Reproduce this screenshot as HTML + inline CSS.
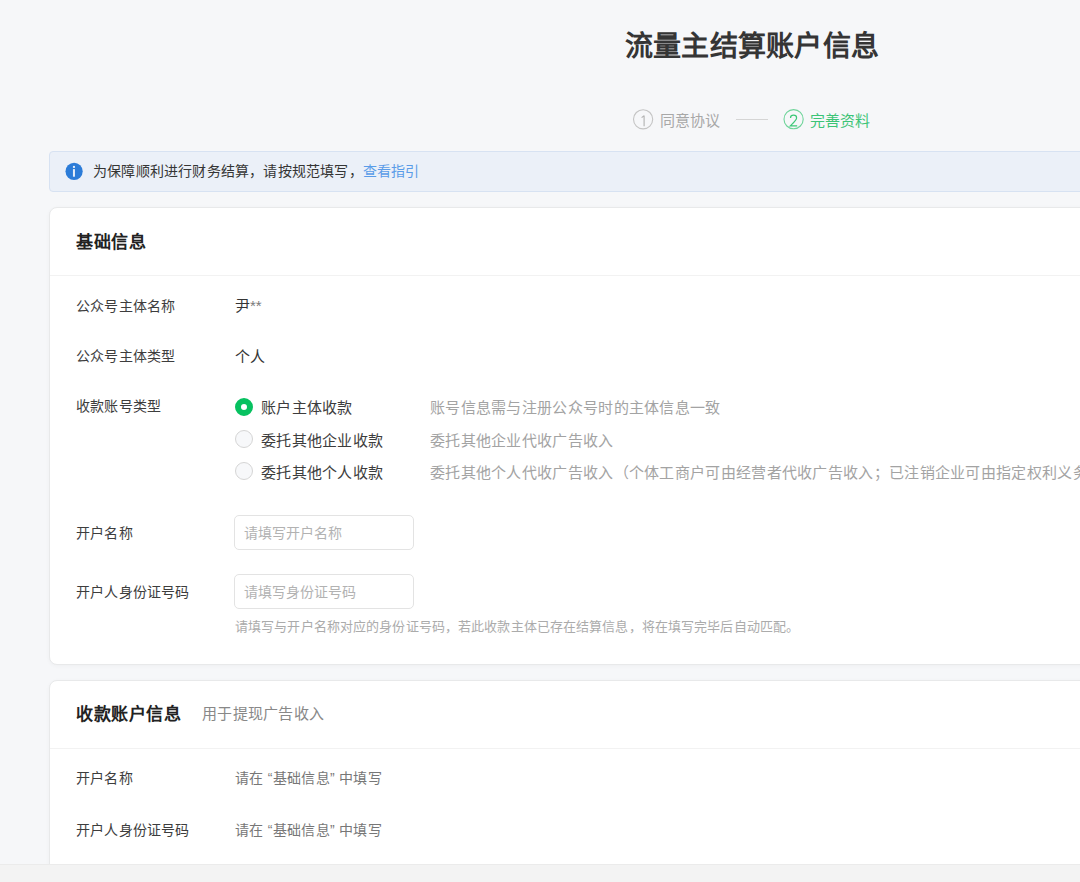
<!DOCTYPE html>
<html lang="zh-CN"><head><meta charset="utf-8">
<style>
html,body{margin:0;padding:0;}
body{width:1080px;height:882px;overflow:hidden;position:relative;background:#f6f7f9;font-family:"Liberation Sans",sans-serif;color:#353535;}
.abs{position:absolute;white-space:nowrap;}
.title{left:0;width:1504px;top:27px;text-align:center;font-size:28px;font-weight:bold;line-height:40px;color:#353535;letter-spacing:0.25px;}
.steps{left:0;width:1504px;top:108px;height:22px;text-align:center;font-size:15px;line-height:22px;}
.stxt{font-size:15px;line-height:22px;}
.circ{display:inline-block;width:18px;height:18px;border:1px solid #b8b8b8;border-radius:50%;text-align:center;line-height:22px;font-size:16px;vertical-align:top;box-sizing:content-box;}
.alert{left:49px;top:151px;width:1500px;height:39px;background:#ebf0f8;border:1px solid #d7e2f2;border-radius:4px;}
.card{left:49px;width:1500px;background:#fff;border:1px solid #e8e9ea;border-radius:8px;box-shadow:0 1px 4px rgba(0,0,0,0.035);}
.hd{font-size:17px;font-weight:bold;color:#222;letter-spacing:0.5px;}
.lbl{font-size:14px;color:#3d3d3d;line-height:20px;letter-spacing:0.2px;}
.val{font-size:15px;color:#353535;line-height:20px;}
.radio{width:16px;height:16px;border:1px solid #d5d5d5;border-radius:50%;background:#f7f8fa;}
.radio.on{width:6px;height:6px;border:6px solid #07c160;background:#fff;}
.rl{font-size:15px;letter-spacing:0.3px;color:#3d3d3d;line-height:20px;}
.desc{font-size:15px;letter-spacing:0.3px;color:#a3a3a3;line-height:20px;}
.inp{width:178px;height:33px;border:1px solid #e3e3e3;border-radius:5px;background:#fff;}
.ph{font-size:14px;color:#b2b2b2;line-height:20px;}
.hint{font-size:13px;color:#ababab;line-height:18px;letter-spacing:0.12px;}
.foot{left:0;top:864px;width:1080px;height:18px;background:#f3f3f3;border-top:1px solid #ebebeb;box-sizing:border-box;}
</style></head><body>
<div class="abs title">流量主结算账户信息</div>
<svg class="abs" style="left:630px;top:100px;" width="180" height="40" viewBox="630 100 180 40"><circle cx="643.1" cy="119.3" r="9.6" fill="none" stroke="#c4c4c4" stroke-width="1.1"/><path d="M644.1,115.6 L644.1,126.3 M644.1,115.7 L641.6,117.6" fill="none" stroke="#b4b4b4" stroke-width="1.15"/><circle cx="793.6" cy="119.2" r="9.6" fill="none" stroke="#6fd49a" stroke-width="1.1"/><path d="M790.5,117.9 C790.5,116.1 791.8,115.2 793.6,115.2 C795.4,115.2 796.6,116.3 796.6,117.9 C796.6,119.8 795.2,121 790.3,125.9 L797.2,125.9" fill="none" stroke="#3cc877" stroke-width="1.2"/></svg>
<div class="abs stxt" style="left:660px;top:110px;color:#a8a8a8;">同意协议</div>
<div class="abs" style="left:736px;top:119px;width:32px;height:1px;background:#d5d5d5;"></div>
<div class="abs stxt" style="left:810px;top:110px;color:#3cc477;">完善资料</div>

<div class="abs alert"></div>
<svg class="abs" style="left:62px;top:160px;" width="24" height="24" viewBox="0 0 24 24"><circle cx="12.1" cy="11.3" r="8.6" fill="#2c7cd8"/><rect x="10.95" y="5.9" width="2" height="2" fill="#e6eef9"/><rect x="10.95" y="9.1" width="2" height="7.6" fill="#e6eef9"/></svg>
<div class="abs lbl" style="left:93px;top:161px;color:#353535;">为保障顺利进行财务结算，请按规范填写，<span style="color:#5a9ce8">查看指引</span></div>

<div class="abs card" style="top:207px;height:456px;"></div>
<div class="abs hd" style="left:76px;top:231px;line-height:24px;">基础信息</div>
<div class="abs" style="left:50px;top:275px;width:1500px;height:1px;background:#f2f2f2;"></div>

<div class="abs lbl" style="left:76px;top:296px;">公众号主体名称</div>
<div class="abs val" style="left:235px;top:296px;">尹<span style="color:#7a7a7a">**</span></div>
<div class="abs lbl" style="left:76px;top:346px;">公众号主体类型</div>
<div class="abs val" style="left:235px;top:347px;">个人</div>
<div class="abs lbl" style="left:76px;top:396px;">收款账号类型</div>

<div class="abs radio on" style="left:235px;top:398px;"></div>
<div class="abs rl" style="left:261px;top:398px;">账户主体收款</div>
<div class="abs desc" style="left:430px;top:398px;">账号信息需与注册公众号时的主体信息一致</div>
<div class="abs radio" style="left:235px;top:430px;"></div>
<div class="abs rl" style="left:261px;top:431px;">委托其他企业收款</div>
<div class="abs desc" style="left:430px;top:431px;">委托其他企业代收广告收入</div>
<div class="abs radio" style="left:235px;top:462px;"></div>
<div class="abs rl" style="left:261px;top:463px;">委托其他个人收款</div>
<div class="abs desc" style="left:430px;top:463px;">委托其他个人代收广告收入（个体工商户可由经营者代收广告收入；已注销企业可由指定权利义务承接人代收广告收入）</div>

<div class="abs lbl" style="left:76px;top:523px;">开户名称</div>
<div class="abs inp" style="left:234px;top:515px;"></div>
<div class="abs ph" style="left:244px;top:523px;">请填写开户名称</div>

<div class="abs lbl" style="left:76px;top:582px;">开户人身份证号码</div>
<div class="abs inp" style="left:234px;top:574px;"></div>
<div class="abs ph" style="left:244px;top:582px;">请填写身份证号码</div>
<div class="abs hint" style="left:235px;top:618px;">请填写与开户名称对应的身份证号码，若此收款主体已存在结算信息，将在填写完毕后自动匹配。</div>

<div class="abs card" style="top:680px;height:400px;"></div>
<div class="abs hd" style="left:76px;top:703px;line-height:24px;">收款账户信息</div>
<div class="abs desc" style="left:202px;top:704px;color:#888;">用于提现广告收入</div>
<div class="abs" style="left:50px;top:748px;width:1500px;height:1px;background:#f2f2f2;"></div>
<div class="abs lbl" style="left:76px;top:768px;">开户名称</div>
<div class="abs val" style="left:235px;top:768px;color:#777;font-size:14px;letter-spacing:0.3px;">请在 “基础信息” 中填写</div>
<div class="abs lbl" style="left:76px;top:820px;">开户人身份证号码</div>
<div class="abs val" style="left:235px;top:820px;color:#777;font-size:14px;letter-spacing:0.3px;">请在 “基础信息” 中填写</div>

<div class="abs foot"></div>
</body></html>
